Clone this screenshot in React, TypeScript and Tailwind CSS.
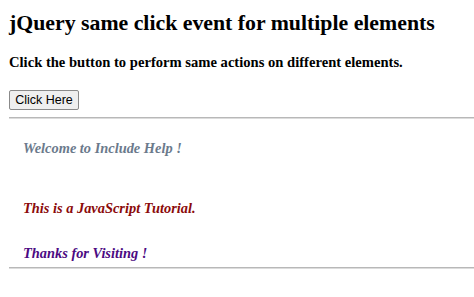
import React from "react";

export default function App() {
  return (
    <div
      className="w-[474px] h-[297px] overflow-hidden bg-white pl-[9px] text-black"
      style={{ fontFamily: '"Liberation Serif", "Times New Roman", serif' }}
    >
      <h1 className="mt-[12.7px] text-[21.8px] font-bold leading-none whitespace-nowrap">
        jQuery same click event for multiple elements
      </h1>
      <h3 className="mt-[20.6px] text-[14.6px] font-bold leading-none whitespace-nowrap">
        Click the button to perform same actions on different elements.
      </h3>
      <button
        className="mt-[20.3px] flex items-center justify-center w-[70px] h-[20px] rounded-[2px] border border-[#8a8a8a] bg-[#efefef] text-[12.5px] leading-none text-black"
        style={{ fontFamily: '"Liberation Sans", Arial, sans-serif' }}
      >
        Click Here
      </button>
      <div className="mt-[7px] h-[2px] border-t border-b border-t-[#b8b8b8] border-b-[#dcdcdc]" />
      <div className="pl-[14px] italic font-bold text-[14.4px] leading-none">
        <p className="mt-[21.9px] text-[#6b7a8c] whitespace-nowrap">Welcome to Include Help !</p>
        <p className="mt-[45.6px] text-[#8b0a0a] whitespace-nowrap">This is a JavaScript Tutorial.</p>
        <p className="mt-[30.6px] text-[#4b0a82] whitespace-nowrap">Thanks for Visiting !</p>
      </div>
      <div className="mt-[7px] h-[2px] border-t border-b border-t-[#b8b8b8] border-b-[#dcdcdc]" />
    </div>
  );
}
